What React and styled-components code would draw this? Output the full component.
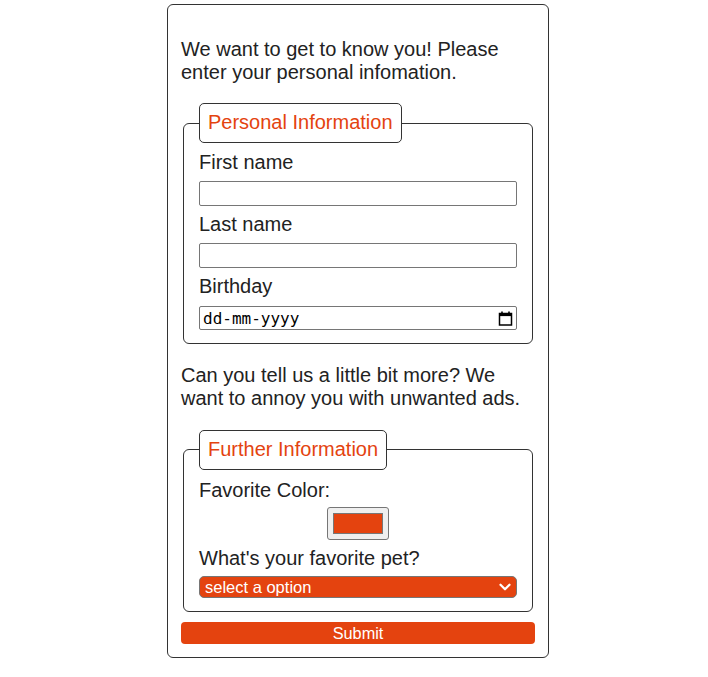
import React from 'react';
import styled, { createGlobalStyle } from 'styled-components';
import { ChevronDown } from 'lucide-react';

const accent = '#e4430f';

const GlobalStyle = createGlobalStyle`
  body {
    margin: 0;
    background: #fff;
    font-family: "Liberation Sans", Arial, sans-serif;
    color: #222;
  }
`;

// Card that holds the whole form
const FormCard = styled.form`
  box-sizing: border-box;
  width: 382px;
  margin: 4px 0 0 167px;
  padding: 13px;
  border: 1px solid #333;
  border-radius: 6px;
  font-size: 20px;
`;

const Intro = styled.p`
  margin: 20px 0 ${(p) => p.$bottom || 20}px;
  line-height: 23px;
`;

const Group = styled.fieldset`
  margin: 0 2px;
  padding: ${(p) => p.$top || 8}px 15px ${(p) => p.$bottom || 12.5}px;
  border: 1px solid #333;
  border-radius: 6px;
`;

const Legend = styled.legend`
  box-sizing: border-box;
  height: 40px;
  padding: 7px 8px 8px;
  border: 1px solid #333;
  border-radius: 5px;
  color: ${accent};
  line-height: 23px;
`;

const Label = styled.label`
  display: block;
  line-height: 23px;
  margin-bottom: ${(p) => p.$gap || 7}px;
`;

const TextInput = styled.input`
  display: block;
  box-sizing: border-box;
  width: 100%;
  height: ${(p) => p.$h || 25}px;
  margin: 0 0 ${(p) => p.$after ?? 7}px;
  padding: 1px 3px;
  border: 1px solid #767676;
  border-radius: 2px;
  font-family: "DejaVu Sans Mono", monospace;
  font-size: 16px;
  color: #000;
  background: #fff;

  &::placeholder {
    color: #000;
    opacity: 1;
  }
`;

const DateWrap = styled.div`
  position: relative;
`;

const CalendarIcon = styled.svg`
  position: absolute;
  right: 4px;
  top: 5px;
  pointer-events: none;
`;

const ColorRow = styled.div`
  display: flex;
  justify-content: center;
  margin-bottom: 7px;
`;

const ColorPicker = styled.input`
  box-sizing: border-box;
  width: 62px;
  height: 33px;
  margin: 0;
  padding: 1px 2px;
  border: 1px solid #767676;
  border-radius: 3px;
  background: #efefef;
  cursor: pointer;

  &::-webkit-color-swatch-wrapper {
    padding: 4px 3px;
  }
  &::-webkit-color-swatch {
    border: 1px solid #777;
    border-radius: 0;
  }
`;

const SelectWrap = styled.div`
  position: relative;
`;

const Select = styled.select`
  appearance: none;
  display: block;
  box-sizing: border-box;
  width: 100%;
  height: 22px;
  margin: 0;
  padding: 0 24px 0 5px;
  border: 1px solid #767676;
  border-radius: 5px;
  background: ${accent};
  color: #fff;
  font-family: "Liberation Sans", Arial, sans-serif;
  font-size: 16.5px;
  line-height: 20px;
`;

const Chevron = styled(ChevronDown)`
  position: absolute;
  right: 3px;
  top: 2px;
  color: #fff;
  pointer-events: none;
`;

const SubmitButton = styled.button`
  display: block;
  width: 100%;
  height: 22px;
  margin-top: 10px;
  padding: 0;
  border: none;
  border-radius: 4px;
  background: ${accent};
  color: #fff;
  font-family: "Liberation Sans", Arial, sans-serif;
  font-size: 16.3px;
  line-height: 22px;
  cursor: pointer;
`;

export default function App() {
  return (
    <>
      <GlobalStyle />
      <FormCard onSubmit={(e) => e.preventDefault()}>
        <Intro $bottom={19}>
          We want to get to know you! Please enter your personal infomation.
        </Intro>
        <Group>
          <Legend>Personal Information</Legend>
          <Label htmlFor="first">First name</Label>
          <TextInput id="first" type="text" />
          <Label htmlFor="last">Last name</Label>
          <TextInput id="last" type="text" />
          <Label htmlFor="birthday" $gap={8}>Birthday</Label>
          <DateWrap>
            <TextInput id="birthday" type="text" placeholder="dd-mm-yyyy" $h={24} $after={0} />
            <CalendarIcon width="15" height="15" viewBox="0 0 15 15">
              <path d="M4 0.5v2.5M11 0.5v2.5" stroke="#000" strokeWidth="1.6" />
              <rect x="1.5" y="2.5" width="12" height="11.5" fill="none" stroke="#000" strokeWidth="1.5" />
              <rect x="1.5" y="2.5" width="12" height="2.6" fill="#000" />
            </CalendarIcon>
          </DateWrap>
        </Group>
        <Intro>
          Can you tell us a little bit more? We want to annoy you with unwanted ads.
        </Intro>
        <Group $top={9} $bottom={13}>
          <Legend>Further Information</Legend>
          <Label htmlFor="color" $gap={5}>Favorite Color:</Label>
          <ColorRow>
            <ColorPicker id="color" type="color" defaultValue="#e4430f" />
          </ColorRow>
          <Label htmlFor="pet" $gap={6}>What's your favorite pet?</Label>
          <SelectWrap>
            <Select id="pet" defaultValue="">
              <option value="" disabled>select a option</option>
              <option value="dog">Dog</option>
              <option value="cat">Cat</option>
              <option value="fish">Fish</option>
            </Select>
            <Chevron size={18} strokeWidth={3} />
          </SelectWrap>
        </Group>
        <SubmitButton type="submit">Submit</SubmitButton>
      </FormCard>
    </>
  );
}
